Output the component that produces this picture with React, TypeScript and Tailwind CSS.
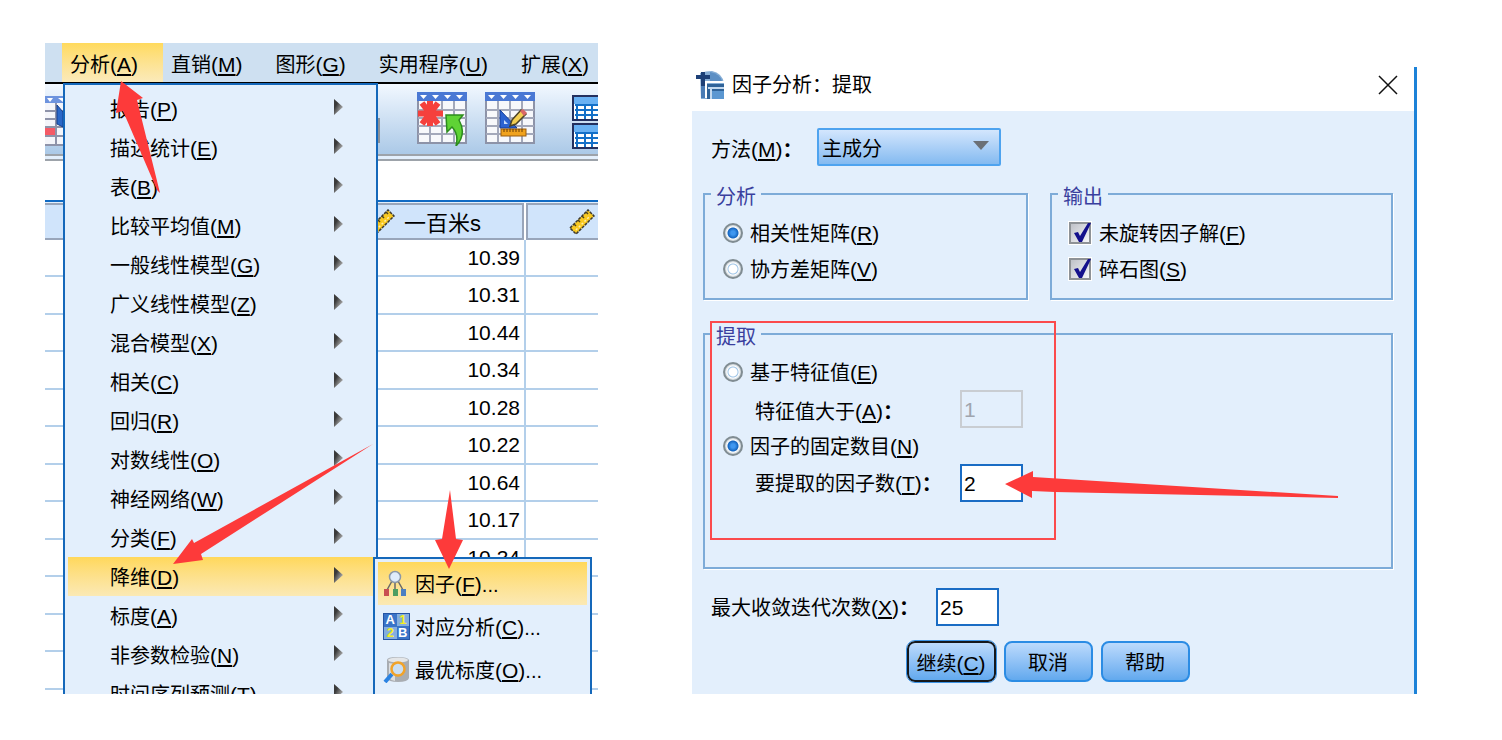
import type { ReactNode } from 'react'

type Entry = { text: string; hotkey: string }

const MENU_BAR: Entry[] = [
  { text: '分析', hotkey: 'A' },
  { text: '直销', hotkey: 'M' },
  { text: '图形', hotkey: 'G' },
  { text: '实用程序', hotkey: 'U' },
  { text: '扩展', hotkey: 'X' },
]

const ANALYZE_MENU: Entry[] = [
  { text: '报告', hotkey: 'P' },
  { text: '描述统计', hotkey: 'E' },
  { text: '表', hotkey: 'B' },
  { text: '比较平均值', hotkey: 'M' },
  { text: '一般线性模型', hotkey: 'G' },
  { text: '广义线性模型', hotkey: 'Z' },
  { text: '混合模型', hotkey: 'X' },
  { text: '相关', hotkey: 'C' },
  { text: '回归', hotkey: 'R' },
  { text: '对数线性', hotkey: 'O' },
  { text: '神经网络', hotkey: 'W' },
  { text: '分类', hotkey: 'F' },
  { text: '降维', hotkey: 'D' },
  { text: '标度', hotkey: 'A' },
  { text: '非参数检验', hotkey: 'N' },
  { text: '时间序列预测', hotkey: 'T' },
]

const VALUES = ['10.39', '10.31', '10.44', '10.34', '10.28', '10.22', '10.64', '10.17', '10.34', '', '', '']

function Caption({ text, hotkey, suffix }: Entry & { suffix?: string }) {
  return (
    <span className="inline-block pt-[2px] whitespace-nowrap">
      {text}
      <span className="text-[21px]">
        (<span className="underline decoration-2 underline-offset-2">{hotkey}</span>)
      </span>
      {suffix === '：' ? <b>{suffix}</b> : suffix}
    </span>
  )
}

/* ---------- icons ---------- */

function GridBase() {
  return (
    <>
      <rect x="1" y="1" width="48" height="50" fill="#f7f8fb" stroke="#8d93a8" strokeWidth="2" />
      <path d="M1 18H49M1 26H49M1 34H49M1 42H49M13 8V50M25 8V50M37 8V50" stroke="#a3a8ba" strokeWidth="2" />
      <rect x="0" y="0" width="50" height="9" fill="#4a78d4" />
      <path d="M3 3h7l-3.500 4zM15 3h7l-3.500 4zM27 3h7l-3.500 4zM39 3h7l-3.500 4z" fill="#fff" />
    </>
  )
}

function RemoveGridIcon() {
  return (
    <svg viewBox="0 0 50 54" className="h-[54px] w-[50px] shrink-0" aria-hidden="true">
      <GridBase />
      <path d="M13 9V34M1 21.500H26M5 11L21 32M21 11L5 32" stroke="#f5403c" strokeWidth="6" />
      <path d="M29 23H46L42 28Q50 42 39 54Q42 42 35 35L30 40Z" fill="#5fd335" stroke="#2c8c1d" strokeWidth="1.500" />
    </svg>
  )
}

function DesignGridIcon() {
  return (
    <svg viewBox="0 0 50 54" className="h-[54px] w-[50px] shrink-0" aria-hidden="true">
      <GridBase />
      <path d="M15 18V36H32Z" fill="#2b62d0" stroke="#153d96" />
      <path d="M19 28V32H23Z" fill="#c9dcfa" />
      <path d="M25 34L27 28L36 18L41 22L31 32Z" fill="#f3cf52" stroke="#4c4326" strokeWidth="1.500" />
      <path d="M35 19L38 17L42 21L39 24Z" fill="#d96868" />
      <rect x="16" y="37" width="25" height="7" fill="#f0a21d" stroke="#9a5c0e" />
      <path d="M19 37v3M22 37v3M25 37v3M28 37v3M31 37v3M34 37v3M37 37v3" stroke="#6b3d05" />
    </svg>
  )
}

function StackedTablesIcon() {
  return (
    <svg viewBox="0 0 50 54" className="h-[54px] w-[50px] shrink-0" aria-hidden="true">
      {[1, 29].map((y) => (
        <g key={y}>
          <rect x="1" y={y} width="48" height="24" fill="#fff" stroke="#23305f" strokeWidth="2" />
          <rect x="2" y={y + 1} width="46" height="7" fill="#69b1f3" />
          <path
            d={`M3 ${y + 9}H48M3 ${y + 14}H48M3 ${y + 19}H48M5 ${y + 9}V${y + 23}M13 ${y + 9}V${y + 23}M20 ${y + 9}V${y + 23}M28 ${y + 9}V${y + 23}`}
            stroke="#1470c8"
            strokeWidth="2"
          />
        </g>
      ))}
    </svg>
  )
}

function CaseGridIcon() {
  return (
    <svg viewBox="0 0 18 50" className="h-[50px] w-[18px] shrink-0" aria-hidden="true">
      <rect width="18" height="49" fill="#f4f5fa" />
      <rect width="18" height="7" fill="#6d93de" />
      <path d="M2 2h6l-3 4zM13 2h5v4z" fill="#fff" />
      <path d="M0 15H18M0 23H18M0 31H18M0 40H18M0 49H18M11 7V49" stroke="#8e93a9" strokeWidth="2" />
      <rect y="32" width="10" height="7" fill="#f55a66" />
      <path d="M12 9L18 16V31L12 28Z" fill="#2a68c8" stroke="#153f8f" />
    </svg>
  )
}

function RulerIcon() {
  return (
    <svg viewBox="0 0 26 26" className="h-[26px] w-[26px] shrink-0" aria-hidden="true">
      <path d="M1 19L19 1L25 7L7 25Z" fill="#f9c921" stroke="#3d3a30" strokeWidth="1.500" strokeDasharray="3 1" />
      <path d="M5 15l2 2M9 11l2 2M13 7l2 2M17 3l2 2" stroke="#4a4020" strokeWidth="1.500" />
      <path d="M7 21L21 7" stroke="#fdeeb0" strokeWidth="1.500" strokeDasharray="2 2" />
    </svg>
  )
}

function MenuArrow() {
  return (
    <svg viewBox="0 0 9 16" className="mb-1 h-4 w-[9px] shrink-0" aria-hidden="true">
      <defs>
        <linearGradient id="menu-arrow" x1="0" y1="0" x2="1" y2="1">
          <stop offset="0.300" stopColor="#3a3a3a" />
          <stop offset="0.800" stopColor="#b4b4b4" />
        </linearGradient>
      </defs>
      <path d="M0 0L9 8L0 16Z" fill="url(#menu-arrow)" />
    </svg>
  )
}

function FactorIcon() {
  return (
    <svg viewBox="0 0 27 27" className="size-[27px] shrink-0" aria-hidden="true">
      <path d="M12 12V20M9 11L4 20M15 11L20 20" stroke="#686868" strokeWidth="1.500" fill="none" />
      <circle cx="12" cy="7" r="5.500" fill="#dfecfb" stroke="#8b98a8" strokeWidth="1.500" />
      <rect x="1" y="19" width="5" height="7" fill="#c94f51" />
      <rect x="10" y="19" width="5" height="7" fill="#4d9e62" />
      <rect x="18" y="19" width="5" height="7" fill="#4b7fc2" />
    </svg>
  )
}

function CorrespondenceIcon() {
  return (
    <span
      aria-hidden="true"
      className="grid size-[27px] shrink-0 grid-cols-2 place-items-center border border-[#2454a4] bg-[#3a74c8] text-[13px] leading-[12px] font-bold text-white"
    >
      <span>A</span>
      <span className="w-full bg-[#84aede] text-center text-[#f7ee22]">1</span>
      <span className="w-full bg-[#84aede] text-center text-[#f7ee22]">2</span>
      <span>B</span>
    </span>
  )
}

function ScalingIcon() {
  return (
    <svg viewBox="0 0 27 27" className="size-[27px] shrink-0" aria-hidden="true">
      <path d="M4 4Q4 1 14 1Q25 1 26 4V22Q25 26 15 26Q5 26 4 22Z" fill="#a9adb2" />
      <ellipse cx="15" cy="4" rx="10" ry="2.500" fill="#e4e6e8" />
      <path d="M6 7V22Q9 25 12 25V8Z" fill="#dcdee0" />
      <path d="M9 18L2 26" stroke="#2b83e2" strokeWidth="4" />
      <circle cx="15" cy="13" r="6.500" fill="#c9def3" stroke="#f1a32a" strokeWidth="2.500" />
    </svg>
  )
}

function AppIcon() {
  return (
    <svg viewBox="0 0 28 28" className="size-7 shrink-0" aria-hidden="true">
      <path d="M4 2Q10 0 16 0Q26 2 28 12V28H5Z" fill="#86aed6" />
      <path d="M14 9V1Q24 3 26 10H14Z" fill="#5c8fc4" />
      <path d="M10 27V11H28" fill="none" stroke="#fff" strokeWidth="2" />
      <path d="M11 28V13H28V28Z" fill="#2f6399" />
      <path d="M12 17H28M15 28V18" stroke="#c3d9ef" strokeWidth="2" fill="none" />
      <path d="M16 20H28V28H16Z" fill="#5b97d1" />
      <path d="M7 1V16M0 6H14" stroke="#1d4077" strokeWidth="4" />
      <path d="M7 15V27" stroke="#4a7cb5" strokeWidth="4" />
    </svg>
  )
}

/* ---------- data editor with the analyze menu open ---------- */

function SubItem({ icon, active, ...entry }: Entry & { icon: ReactNode; active?: boolean }) {
  return (
    <li>
      <button
        type="button"
        className={`flex h-[43px] w-full items-center gap-[5px] pl-[5px] text-left ${
          active ? 'bg-linear-to-b from-[#ffd85a] to-[#fbe9b4]' : ''
        }`}
      >
        {icon}
        <Caption {...entry} suffix="..." />
      </button>
    </li>
  )
}

function DataEditor() {
  return (
    <section className="relative overflow-hidden bg-[#e3effc]">
      <nav className="flex h-[41px] border-b-2 border-black bg-[#cee0f1] pl-[17px]">
        {MENU_BAR.map((m, i) => (
          <button
            key={m.hotkey}
            type="button"
            className={`shrink-0 pt-[2px] pr-[25px] pl-2 ${i === 0 ? 'bg-linear-to-b from-[#ffda5c] to-[#fbeaba]' : ''}`}
          >
            <Caption {...m} />
          </button>
        ))}
      </nav>

      <div className="flex h-[72px] items-start border-b-2 border-[#9da3aa] bg-linear-to-b from-[#f2f8ff] to-[#abc9e7] pt-2">
        <div className="mt-1">
          <CaseGridIcon />
        </div>
        <span className="mt-[26px] ml-[315px] h-[25px] w-[2px] shrink-0 bg-[#8b9199]" />
        <div className="ml-[37px] flex gap-[18px]">
          <RemoveGridIcon />
          <DesignGridIcon />
          <div className="ml-[19px] pt-[3px]">
            <StackedTablesIcon />
          </div>
        </div>
      </div>

      <div className="mt-[3px] h-[43px] border-t-2 border-b-2 border-t-[#9da3aa] border-b-[#0f6ac4] bg-white" />

      <table className="mt-px w-full table-fixed border-separate border-spacing-0 bg-white">
        <thead>
          <tr>
            <th className="w-[481px] p-0 pr-[2px] font-normal">
              <div className="flex h-[37px] items-center justify-end gap-[9px] border-2 border-l-0 border-[#98a5ba] bg-[#d0e4fb] pr-[41px] text-[22px]">
                <RulerIcon />
                <span className="pt-1">一百米s</span>
              </div>
            </th>
            <th className="p-0">
              <div className="flex h-[37px] items-center border-2 border-r-0 border-[#98a5ba] bg-[#d0e4fb] pl-[41px]">
                <RulerIcon />
              </div>
            </th>
          </tr>
        </thead>
        <tbody className="text-[21px] leading-6">
          {VALUES.map((v, i) => (
            <tr key={i} className="h-[37px] even:h-[38px]">
              <td className="border-r-2 border-b-2 border-[#b3cfea] p-0 pr-1 text-right">{v}</td>
              <td className="border-b-2 border-[#b3cfea] p-0" />
            </tr>
          ))}
        </tbody>
      </table>
      <div className="h-1 bg-white" />

      <ul className="absolute top-10 left-[18px] w-[315px] border-2 border-[#1568ba] bg-[#e3effc] px-[3px] pt-1">
        {ANALYZE_MENU.map((m) => (
          <li key={m.text}>
            <button
              type="button"
              className={`flex h-[39px] w-full items-center justify-between pr-[30px] pl-[42px] ${
                m.hotkey === 'D' ? 'bg-linear-to-b from-[#ffd85a] to-[#fbe9b4]' : ''
              }`}
            >
              <Caption {...m} />
              <MenuArrow />
            </button>
          </li>
        ))}
      </ul>

      <ul className="absolute top-[514px] left-[328px] h-[180px] w-[219px] border-2 border-[#1568ba] bg-[#e3effc] p-[3px]">
        <SubItem text="因子" hotkey="F" icon={<FactorIcon />} active />
        <SubItem text="对应分析" hotkey="C" icon={<CorrespondenceIcon />} />
        <SubItem text="最优标度" hotkey="O" icon={<ScalingIcon />} />
      </ul>

      {/* hint arrows over the menus */}
      <svg
        viewBox="45 43 553 651"
        className="pointer-events-none absolute top-0 left-0 h-[651px] w-[553px]"
        fill="#fd3a3a"
        aria-hidden="true"
      >
        <path d="M121 81L143 98L137 100L160 193L157 190L123 111L116 113Z" />
        <path d="M173 564L192 539L194 543L373 444L201 554L203 560Z" />
        <path d="M449 569L463 540L456 539L450 490L442 539L435 540Z" />
      </svg>
    </section>
  )
}

/* ---------- extraction dialog ---------- */

function Radio({ name, defaultChecked, ...entry }: Entry & { name: string; defaultChecked?: boolean }) {
  return (
    <label className="flex h-9 items-center gap-[7px] pl-[18px]">
      <input
        type="radio"
        name={name}
        defaultChecked={defaultChecked}
        className="size-5 appearance-none rounded-full border-2 border-[#808c92] bg-[radial-gradient(circle,#fff_4px,#9cc3e6_5px,#fff_6px,#c6ced3_8px)] checked:bg-[radial-gradient(circle,#3f97f0_2px,#1465c0_5px,#fff_6px,#c6ced3_8px)]"
      />
      <Caption {...entry} />
    </label>
  )
}

function Check(entry: Entry) {
  return (
    <label className="flex h-9 items-center gap-2 pl-[17px]">
      <span className="relative flex">
        <input
          type="checkbox"
          defaultChecked
          className="peer size-[22px] appearance-none border-2 border-[#8e9296] bg-linear-to-br from-[#bfc2c8] to-[#f6f6fa] outline outline-white"
        />
        <svg viewBox="0 0 22 22" className="pointer-events-none absolute inset-0 hidden peer-checked:block" aria-hidden="true">
          <path d="M5 11L9 10L11 14L19 1H22L13 20H10Z" fill="#14108c" />
        </svg>
      </span>
      <Caption {...entry} />
    </label>
  )
}

function Group({ title, className, children }: { title: string; className: string; children: ReactNode }) {
  return (
    <fieldset
      className={`relative min-w-0 border-2 border-[#7dabd8] shadow-[1px_1px_0_#fff] ${className}`}
    >
      <legend className="ml-[6px] px-[5px] pt-[6px] leading-[22px] text-[#3a3f9e]">{title}</legend>
      {children}
    </fieldset>
  )
}

const FIELD = 'h-[38px] w-[63px] border-2 border-[#1a6cc4] bg-white pt-[2px] pl-[2px] text-[21px] disabled:border-[#c9cdd2] disabled:bg-[#e3effc] disabled:text-[#a0a5ae]'

const BUTTON = 'h-[41px] w-[89px] rounded-lg border-2 bg-linear-to-b from-[#bcdafc] to-[#62a9ee] pt-[2px]'

function ExtractionDialog() {
  return (
    <section className="mt-6 border-r-3 border-[#1c82d8] bg-[#e3effc]">
      <header className="flex h-11 items-center bg-white pr-[16px] pb-2 pl-1">
        <AppIcon />
        <h1 className="ml-2 flex-1">因子分析：提取</h1>
        <button type="button" aria-label="关闭">
          <svg viewBox="0 0 20 20" className="size-5" aria-hidden="true">
            <path d="M1 1L19 19M19 1L1 19" stroke="#111" strokeWidth="1.500" />
          </svg>
        </button>
      </header>

      <form className="pt-[17px] pr-[21px] pb-3 pl-[11px]" onSubmit={(e) => e.preventDefault()}>
        <div className="flex items-center pl-2">
          <label htmlFor="method" className="w-[106px] pt-1">
            <Caption text="方法" hotkey="M" suffix="：" />
          </label>
          <div className="relative">
            <select
              id="method"
              className="h-[38px] w-[184px] appearance-none rounded-xs border-2 border-[#4ea3ef] bg-linear-to-b from-[#d3e6fd] to-[#84baf0] pt-1 pl-[3px]"
            >
              <option>主成分</option>
            </select>
            <svg viewBox="0 0 16 9" className="pointer-events-none absolute top-[13px] right-3 h-[9px] w-4" aria-hidden="true">
              <path d="M0 0H16L8 9Z" fill="#6b7076" />
            </svg>
          </div>
        </div>

        <div className="mt-[14px] grid grid-cols-[325fr_343fr] gap-[22px]">
          <Group title="分析" className="pb-[11px]">
            <div className="pt-[7px]">
              <Radio name="matrix" text="相关性矩阵" hotkey="R" defaultChecked />
              <Radio name="matrix" text="协方差矩阵" hotkey="V" />
            </div>
          </Group>
          <Group title="输出" className="pb-[11px]">
            <div className="pt-[7px]">
              <Check text="未旋转因子解" hotkey="F" />
              <Check text="碎石图" hotkey="S" />
            </div>
          </Group>
        </div>

        <Group title="提取" className="mt-5 pb-[65px]">
          <div className="pt-[6px]">
            <Radio name="extract" text="基于特征值" hotkey="E" />
            <div className="flex items-center pl-[50px]">
              <label htmlFor="eigen" className="w-[205px] pt-1">
                <Caption text="特征值大于" hotkey="A" suffix="：" />
              </label>
              <input id="eigen" defaultValue="1" disabled className={FIELD} />
            </div>
            <Radio name="extract" text="因子的固定数目" hotkey="N" defaultChecked />
            <div className="flex items-center pl-[50px]">
              <label htmlFor="count" className="w-[205px]">
                <Caption text="要提取的因子数" hotkey="T" suffix="：" />
              </label>
              <input id="count" defaultValue="2" className={FIELD} />
            </div>
          </div>
          {/* callout frame and arrow */}
          <span className="pointer-events-none absolute -top-[27px] left-[5px] h-[219px] w-[346px] border-2 border-[#fb4a4c]" />
          <svg
            viewBox="1004 469 336 30"
            className="pointer-events-none absolute top-[121px] left-[299px] h-[30px] w-[336px]"
            fill="#fd3a3a"
            aria-hidden="true"
          >
            <path d="M1005 484L1033 471V477L1338 496V498L1055 492L1032 491V498Z" />
          </svg>
        </Group>

        <div className="mt-[19px] flex items-center pl-2">
          <label htmlFor="iterations" className="w-[225px]">
            <Caption text="最大收敛迭代次数" hotkey="X" suffix="：" />
          </label>
          <input id="iterations" defaultValue="25" className={FIELD} />
        </div>

        <div className="mt-[15px] flex justify-center gap-2">
          <button type="submit" className={`${BUTTON} border-[#15181c] outline outline-[#3d94e6]`}>
            <Caption text="继续" hotkey="C" />
          </button>
          <button type="button" className={`${BUTTON} border-[#2b8ce4]`}>
            取消
          </button>
          <button type="button" className={`${BUTTON} border-[#2b8ce4]`}>
            帮助
          </button>
        </div>
      </form>
    </section>
  )
}

export default function App() {
  return (
    <main className="grid grid-cols-[553fr_725fr] items-start gap-[94px] bg-white pt-[43px] pr-[85px] pb-[46px] pl-[45px] font-['Liberation_Sans','Noto_Sans_CJK_SC',sans-serif] text-[20px] leading-7 text-black">
      <DataEditor />
      <ExtractionDialog />
    </main>
  )
}
